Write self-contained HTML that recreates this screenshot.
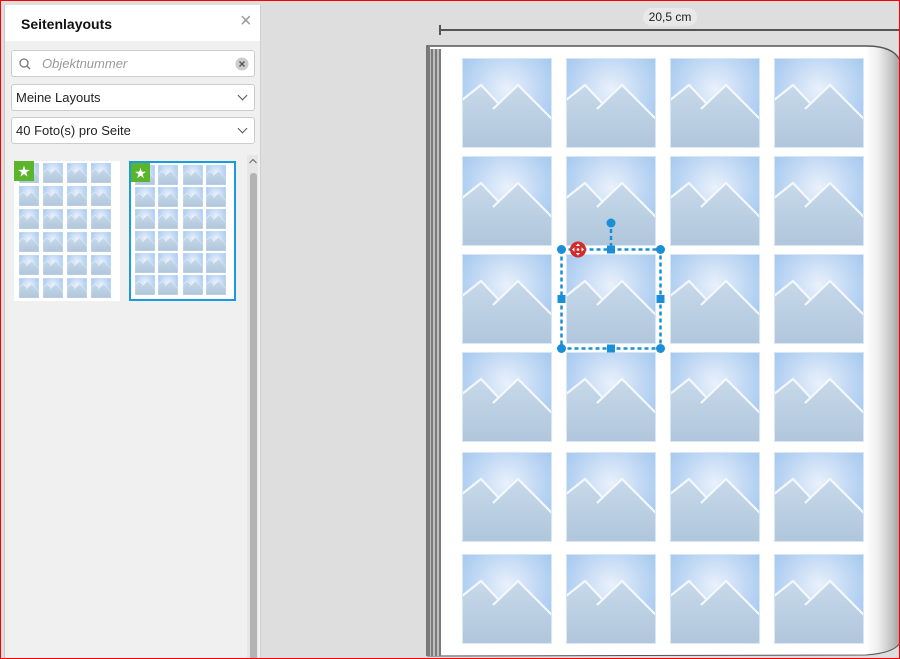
<!DOCTYPE html>
<html><head><meta charset="utf-8">
<style>
*{margin:0;padding:0;box-sizing:border-box}
html,body{width:900px;height:659px;overflow:hidden;background:#dedede;font-family:"Liberation Sans",sans-serif}
.abs{position:absolute}
#frame{position:absolute;left:0;top:0;width:900px;height:659px;border:1px solid #f00;z-index:50;pointer-events:none}
#panel{left:4px;top:5px;width:256px;height:654px;background:#f0f0f0;border-left:1px solid #c8c8c8}
#hdr{left:5px;top:5px;width:255px;height:36px;background:#fff}
.inp{background:#fff;border:1px solid #ccc;border-radius:3px;height:27px;font-size:13px;color:#222;line-height:25px;padding-left:4px}
.chev{position:absolute;right:8px;top:7px;width:7px;height:7px;border-right:1px solid #555;border-bottom:1px solid #555;transform:rotate(45deg)}
</style></head><body>
<svg width="0" height="0" style="position:absolute">
<defs>
<radialGradient id="rg" cx="0.5" cy="0.35" r="0.7">
<stop offset="0" stop-color="#eaf1fb"/><stop offset="0.5" stop-color="#c0d8f4"/><stop offset="1" stop-color="#9ac2ee"/></radialGradient>
<linearGradient id="lg" x1="0" y1="0" x2="0" y2="1"><stop offset="0" stop-color="#c7d9ea"/><stop offset="1" stop-color="#b0c6dc"/></linearGradient>
<symbol id="t" viewBox="0 0 90 90">
<rect width="90" height="90" fill="url(#rg)"/>
<path d="M0 42 L19 27 L36 45 L31 51 L56 27 L90 61 L90 90 L0 90Z" fill="url(#lg)"/>
<path d="M0 42 L19 27 L36 45 M31 51 L56 27 L90 61" stroke="#f4f8fc" stroke-width="2.2" fill="none"/>
<rect x="0.5" y="0.5" width="89" height="89" fill="none" stroke="#d8e6f5"/>
</symbol>
<linearGradient id="edge" x1="0" x2="1"><stop offset="0" stop-color="#fff"/><stop offset="0.35" stop-color="#eee"/><stop offset="0.75" stop-color="#c4c4c4"/><stop offset="1" stop-color="#9e9e9e"/></linearGradient>
</defs></svg>

<div class="abs" id="panel"></div>
<div class="abs" id="hdr"></div>
<div class="abs" style="left:21px;top:16px;font-size:14px;font-weight:bold;color:#111">Seitenlayouts</div>
<div class="abs" style="left:240px;top:11px;font-size:20px;color:#999;line-height:20px">×</div>
<div class="abs inp" style="left:11px;top:50px;width:244px;height:27px">
 <svg class="abs" style="left:7px;top:7px" width="12" height="12"><circle cx="5" cy="5" r="4" stroke="#777" stroke-width="1.3" fill="none"/><path d="M8 8 L11 11" stroke="#777" stroke-width="1.3"/></svg>
 <span class="abs" style="left:30px;top:0;color:#999;font-style:italic">Objektnummer</span>
 <svg class="abs" style="left:223px;top:6px" width="14" height="14"><circle cx="7" cy="7" r="6.5" fill="#ccc"/><path d="M4.5 4.5 L9.5 9.5 M9.5 4.5 L4.5 9.5" stroke="#555" stroke-width="1.3"/></svg>
</div>
<div class="abs inp" style="left:11px;top:84px;width:244px">Meine Layouts<div class="chev"></div></div>
<div class="abs inp" style="left:11px;top:117px;width:244px">40 Foto(s) pro Seite<div class="chev"></div></div>

<div class="abs" style="left:14px;top:161px;width:106px;height:140px;background:#fff"></div>
<svg class="abs" style="left:14px;top:161px" width="106" height="140">
<g id="g1">
<use href="#t" x="5" y="2" width="20" height="20"/><use href="#t" x="29" y="2" width="20" height="20"/><use href="#t" x="53" y="2" width="20" height="20"/><use href="#t" x="77" y="2" width="20" height="20"/>
</g>
<use href="#g1" y="23"/><use href="#g1" y="46"/><use href="#g1" y="69"/><use href="#g1" y="92"/><use href="#g1" y="115"/>
<rect x="0" y="0" width="20" height="20" fill="#5bb52c"/><text x="10" y="15.5" font-size="15" fill="#fff" text-anchor="middle" font-family="DejaVu Sans">★</text>
</svg>
<div class="abs" style="left:129px;top:161px;width:107px;height:140px;background:#fff;border:2px solid #1a9be0"></div>
<svg class="abs" style="left:131px;top:163px" width="103" height="136">
<g id="g2">
<use href="#t" x="4" y="2" width="20" height="20"/><use href="#t" x="27" y="2" width="20" height="20"/><use href="#t" x="52" y="2" width="20" height="20"/><use href="#t" x="75" y="2" width="20" height="20"/>
</g>
<use href="#g2" y="22"/><use href="#g2" y="44"/><use href="#g2" y="66"/><use href="#g2" y="88"/><use href="#g2" y="110"/>
<rect x="0" y="0" width="19" height="19" fill="#5bb52c"/><text x="9.5" y="15" font-size="14" fill="#fff" text-anchor="middle" font-family="DejaVu Sans">★</text>
</svg>
<div class="abs" style="left:247px;top:155px;width:11px;height:504px;background:#e6e6e6"></div>
<svg class="abs" style="left:248px;top:157px" width="10" height="8"><path d="M1.5 6 L5 2.5 L8.5 6" stroke="#666" fill="none"/></svg>
<div class="abs" style="left:250px;top:173px;width:7px;height:486px;background:#b3b3b3;border-radius:3px 3px 0 0"></div>
<div class="abs" style="left:260px;top:5px;width:1px;height:654px;background:#d0d0d0"></div>

<!-- ruler -->
<div class="abs" style="left:440px;top:29px;width:460px;height:2px;background:#555"></div>
<div class="abs" style="left:439px;top:25px;width:2px;height:10px;background:#555"></div>
<div class="abs" style="left:643px;top:8px;width:54px;height:18px;background:#e9e9e9;border-radius:9px;font-size:12px;color:#222;text-align:center;line-height:18px">20,5 cm</div>

<!-- page -->
<svg class="abs" style="left:426px;top:45px" width="474" height="614">
<path d="M1 1 L440 1 Q470 1 474 20 L474 598 Q470 608 440 610 L1 611Z" fill="#fff"/>
<path d="M440 1 Q470 1 474 20 L474 598 Q470 608 440 610 L441 610 L441 1Z" fill="url(#edge)"/>
<path d="M1 611 L1 1 L440 1 Q468 1 474 16" stroke="#555" stroke-width="1.5" fill="none"/>
<path d="M1 611 L440 610 Q468 608 474 598" stroke="#555" stroke-width="1" fill="none"/>
<g fill="#7a7a7a"><rect x="1" y="2" width="3" height="609"/><rect x="5" y="4" width="2" height="607"/><rect x="9" y="4" width="2" height="607"/><rect x="13" y="4" width="2" height="607"/></g>
<g fill="#bdbdbd"><rect x="4" y="4" width="1" height="607"/><rect x="7" y="4" width="2" height="607"/><rect x="11" y="4" width="2" height="607"/></g>
<g id="row"><use href="#t" x="36" y="13" width="90" height="90"/><use href="#t" x="140" y="13" width="90" height="90"/><use href="#t" x="244" y="13" width="90" height="90"/><use href="#t" x="348" y="13" width="90" height="90"/></g>
<use href="#row" y="98"/><use href="#row" y="196"/><use href="#row" y="294"/><use href="#row" y="394"/><use href="#row" y="496"/>
</svg>

<!-- selection -->
<svg class="abs" style="left:550px;top:212px" width="125" height="145">
<g stroke="#1a8fd8" stroke-width="2.5" stroke-dasharray="4 3" fill="none">
<rect x="11.5" y="37.5" width="99" height="99"/><path d="M61 10 L61 37"/></g>
<g fill="#1a8fd8">
<circle cx="61" cy="11" r="4.5"/>
<circle cx="11.5" cy="37.5" r="4.5"/><circle cx="110.5" cy="37.5" r="4.5"/><circle cx="11.5" cy="136.5" r="4.5"/><circle cx="110.5" cy="136.5" r="4.5"/>
<rect x="57" y="33.5" width="8" height="8"/><rect x="57" y="132.5" width="8" height="8"/><rect x="7.5" y="83" width="8" height="8"/><rect x="106.5" y="83" width="8" height="8"/>
</g>
<circle cx="28" cy="37.5" r="8" fill="#d42a2a"/>
<g fill="#fff"><path d="M28 31.5 L25.8 34 L30.2 34Z M28 43.5 L25.8 41 L30.2 41Z M22 37.5 L24.5 35.3 L24.5 39.7Z M34 37.5 L31.5 35.3 L31.5 39.7Z"/><circle cx="28" cy="37.5" r="1.3"/></g>
</svg>

<div id="frame"></div>
</body></html>
